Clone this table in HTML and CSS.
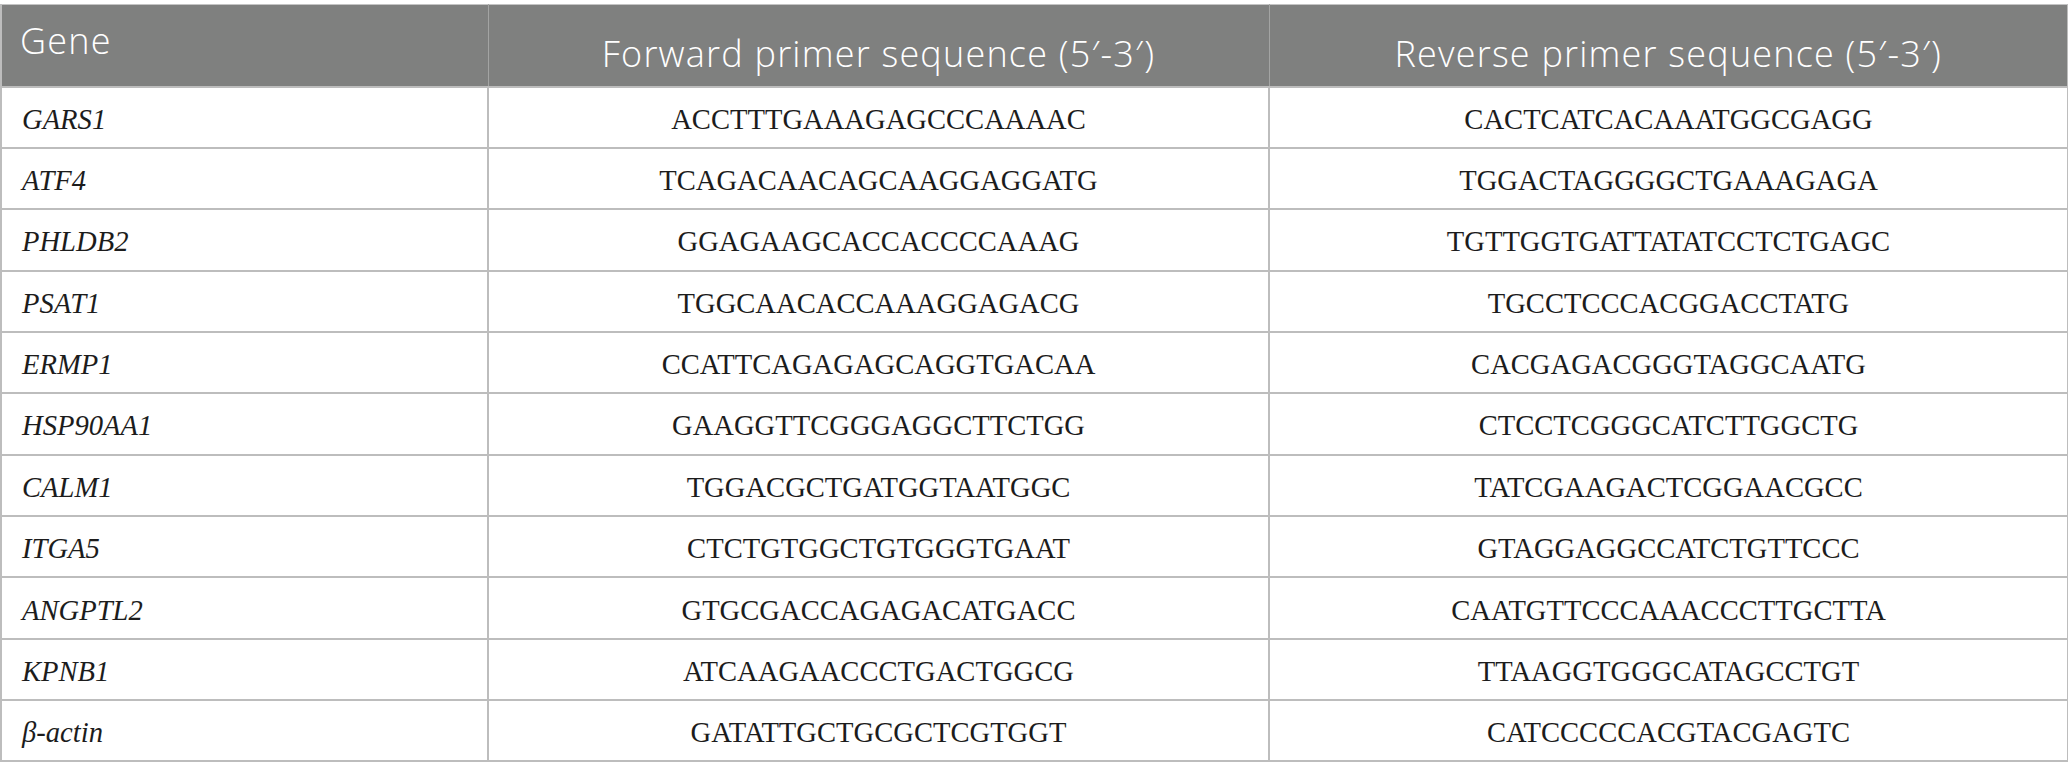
FILE: index.html
```html
<!DOCTYPE html>
<html>
<head>
<meta charset="utf-8">
<link rel="stylesheet" href="styles.css">
</head>
<body>
<table class="primers">
  <colgroup>
    <col class="c-gene">
    <col class="c-fwd">
    <col class="c-rev">
  </colgroup>
  <thead>
    <tr class="head-row">
      <th class="h-gene">Gene</th>
      <th class="h-seq">Forward primer sequence (5′-3′)</th>
      <th class="h-seq">Reverse primer sequence (5′-3′)</th>
    </tr>
  </thead>
  <tbody>
    <tr><td class="gene">GARS1</td><td class="seq">ACCTTTGAAAGAGCCCAAAAC</td><td class="seq">CACTCATCACAAATGGCGAGG</td></tr>
    <tr><td class="gene">ATF4</td><td class="seq">TCAGACAACAGCAAGGAGGATG</td><td class="seq">TGGACTAGGGGCTGAAAGAGA</td></tr>
    <tr><td class="gene">PHLDB2</td><td class="seq">GGAGAAGCACCACCCCAAAG</td><td class="seq">TGTTGGTGATTATATCCTCTGAGC</td></tr>
    <tr><td class="gene">PSAT1</td><td class="seq">TGGCAACACCAAAGGAGACG</td><td class="seq">TGCCTCCCACGGACCTATG</td></tr>
    <tr><td class="gene">ERMP1</td><td class="seq">CCATTCAGAGAGCAGGTGACAA</td><td class="seq">CACGAGACGGGTAGGCAATG</td></tr>
    <tr><td class="gene">HSP90AA1</td><td class="seq">GAAGGTTCGGGAGGCTTCTGG</td><td class="seq">CTCCTCGGGCATCTTGGCTG</td></tr>
    <tr><td class="gene">CALM1</td><td class="seq">TGGACGCTGATGGTAATGGC</td><td class="seq">TATCGAAGACTCGGAACGCC</td></tr>
    <tr><td class="gene">ITGA5</td><td class="seq">CTCTGTGGCTGTGGGTGAAT</td><td class="seq">GTAGGAGGCCATCTGTTCCC</td></tr>
    <tr><td class="gene">ANGPTL2</td><td class="seq">GTGCGACCAGAGACATGACC</td><td class="seq">CAATGTTCCCAAACCCTTGCTTA</td></tr>
    <tr><td class="gene">KPNB1</td><td class="seq">ATCAAGAACCCTGACTGGCG</td><td class="seq">TTAAGGTGGGCATAGCCTGT</td></tr>
    <tr><td class="gene">β-actin</td><td class="seq">GATATTGCTGCGCTCGTGGT</td><td class="seq">CATCCCCCACGTACGAGTC</td></tr>
  </tbody>
</table>
</body>
</html>
```

FILE: styles.css
```css
html, body {
  margin: 0;
  padding: 0;
  background: #ffffff;
}
body {
  padding-top: 4px;
}
.primers {
  border-collapse: collapse;
  width: 2067px;
  table-layout: fixed;
  border: 2px solid #bdbdbd;
  border-top: 1px solid #c4c4c4;
}
.c-gene { width: 487px; }
.c-fwd { width: 781px; }
.c-rev { width: 799px; }
.head-row {
  height: 82px;
  background: #7f807f;
}
.primers th {
  color: #ffffff;
  font-family: "Open Sans", "Noto Sans", sans-serif;
  font-weight: 300;
  font-size: 36px;
  letter-spacing: 1.2px;
  line-height: 1;
  border-left: 1px solid #a3a4a3;
  border-bottom: 2px solid #bdbdbd;
  padding: 0;
}
.primers .h-gene {
  text-align: left;
  vertical-align: top;
  padding: 18px 0 0 18px;
}
.primers .h-seq {
  text-align: center;
  vertical-align: bottom;
  padding: 0 0 14px 0;
}
.primers tbody tr {
  height: 61.36px;
}
.primers td {
  font-family: "Liberation Serif", "Times New Roman", serif;
  font-size: 28.6px;
  color: #1c1c1c;
  border: 2px solid #bdbdbd;
  border-top: 0;
  padding: 5px 0 0 0;
  vertical-align: middle;
}
.primers td.gene {
  font-style: italic;
  text-align: left;
  padding-left: 20px;
}
.primers td.seq {
  text-align: center;
}
```
